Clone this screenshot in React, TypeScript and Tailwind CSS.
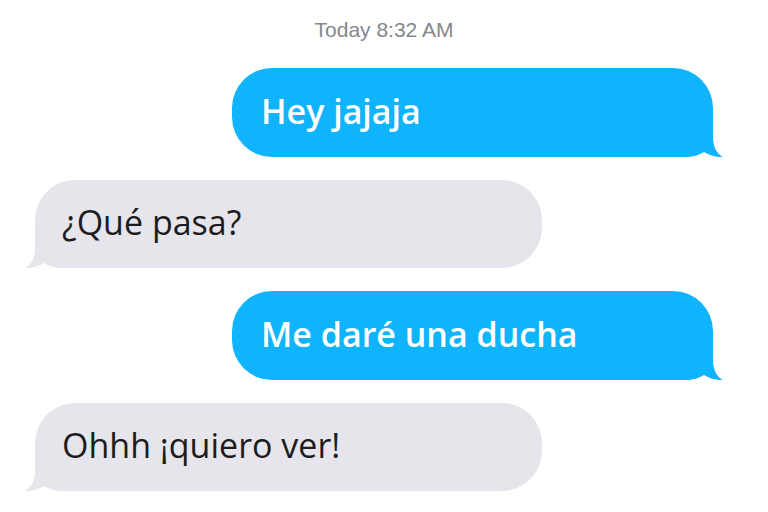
import type { ReactNode } from 'react';

const BLUE = '#10b4fc';
const GRAY = '#e6e5eb';

function Tail({ side, color }: { side: 'left' | 'right'; color: string }) {
  const cls = side === 'right' ? 'absolute bottom-0 right-[-10px]' : 'absolute bottom-0 left-[-10px] -scale-x-100';
  return (
    <svg className={cls} width="50" height="50" viewBox="0 0 50 50" aria-hidden>
      <path
        d="M0 50 L0 0 L40 0 L40 30 C40 40 44 47 50 50 C42 50 36 48 31 45 C26 48 20 50 12 50 Z"
        fill={color}
      />
    </svg>
  );
}

function Bubble({ from, children }: { from: 'me' | 'them'; children: ReactNode }) {
  const me = from === 'me';
  return (
    <div className={me ? 'flex justify-end pr-[55px]' : 'flex justify-start pl-[35px]'}>
      <div
        className={
          me
            ? 'relative flex h-[89px] w-[481px] items-center rounded-[40px] bg-[#10b4fc] pb-[4px] pl-[29px] text-white font-semibold'
            : 'relative flex h-[88px] w-[507px] items-center rounded-[40px] bg-[#e6e5eb] pb-[4px] pl-[27px] text-[#1c1c1e]'
        }
      >
        <Tail side={me ? 'right' : 'left'} color={me ? BLUE : GRAY} />
        <span className="relative text-[34px] leading-none">{children}</span>
      </div>
    </div>
  );
}

export default function App() {
  return (
    <div className="h-[512px] w-[768px] overflow-hidden bg-white font-['Open_Sans','Noto_Sans',sans-serif]">
      <div className="pt-[18px] text-center font-['Liberation_Sans',Arial,sans-serif] text-[21px] leading-[24px] text-[#85878d]">
        Today 8:32 AM
      </div>
      <div className="mt-[26px] flex flex-col gap-[23px]">
        <Bubble from="me">Hey jajaja</Bubble>
        <Bubble from="them">¿Qué pasa?</Bubble>
        <Bubble from="me">Me daré una ducha</Bubble>
        <Bubble from="them">Ohhh ¡quiero ver!</Bubble>
      </div>
    </div>
  );
}
